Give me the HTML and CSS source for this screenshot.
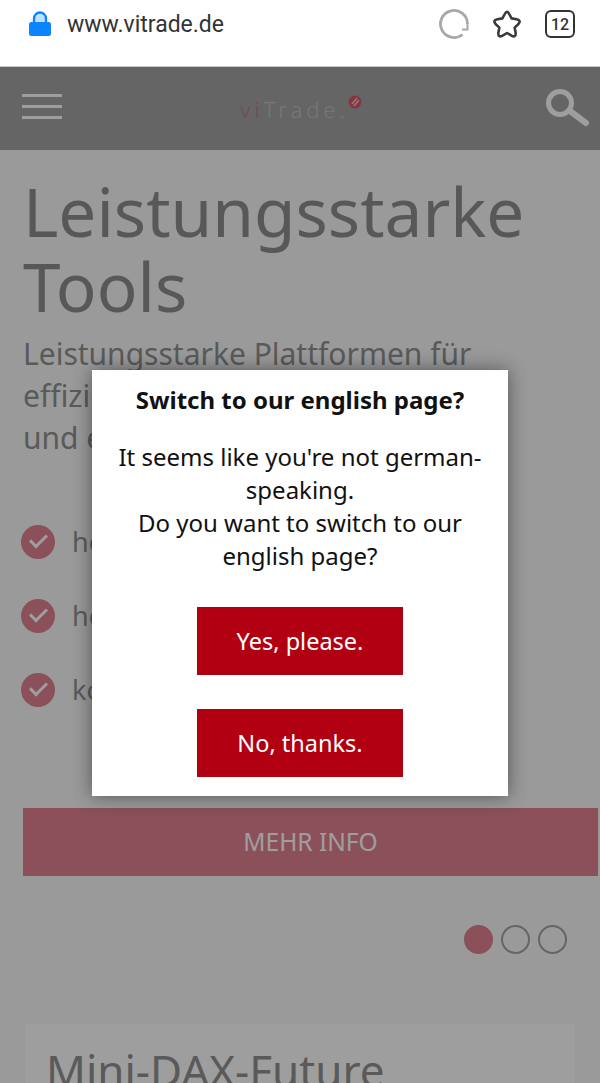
FILE: index.html

```html
<!DOCTYPE html>
<html>
<head>
    <title>vitrade</title>
    <link rel="stylesheet" href="styles.css">
</head>
<body>
    <div class="browser-bar">
        <svg class="lock" width="24" height="26" viewBox="0 0 24 26">
            <path d="M6 12V7.500a6 6 0 0 1 12 0V12" fill="#bfe0ff" stroke="#0a84ff" stroke-width="2.400"/>
            <rect x="1" y="11" width="22" height="14" rx="2.500" fill="#0a84ff"/>
        </svg>
        <span class="url">www.vitrade.de</span>
        <svg class="reload" width="32" height="32" viewBox="0 0 32 32">
            <path d="M24.500 26.500A13.500 13.500 0 1 1 29.500 16" fill="none" stroke="#a8a8a8" stroke-width="2.800"/>
            <path d="M29.500 15v6.500h-5.500" fill="none" stroke="#a8a8a8" stroke-width="2"/>
        </svg>
        <svg class="star" width="32" height="32" viewBox="0 0 32 32">
            <path d="M13.800 6Q16 1.500 18.200 6L20.600 10.400 25.500 11.200Q31 12.300 27 16.500L23.600 19.600 24.600 24.600Q25.200 30 20.400 27.600L16 25 11.600 27.600Q6.800 30 7.400 24.600L8.400 19.600 5 16.500Q1 12.300 6.500 11.200L11.400 10.400Z" fill="none" stroke="#3a3a3a" stroke-width="2.600" stroke-linejoin="round"/>
        </svg>
        <span class="tabs">12</span>
    </div>

    <div class="page">
        <header class="site-header">
            <div class="burger"><span></span><span></span><span></span></div>
            <div class="logo">
                <span class="logo-v">vi</span>Trade.
                <svg class="logo-mark" width="14" height="16" viewBox="0 0 14 16">
                    <circle cx="7" cy="8" r="6.500" fill="#d9586a"/>
                    <path d="M4 10l5-6M6 12l5-6" stroke="#f3c9cf" stroke-width="1.300"/>
                </svg>
            </div>
            <svg class="search" width="48" height="44" viewBox="0 0 48 44">
                <circle cx="17" cy="16" r="11.500" fill="none" stroke="#fff" stroke-width="5"/>
                <path d="M27 24l16 12" stroke="#fff" stroke-width="6" stroke-linecap="round"/>
            </svg>
        </header>

        <section class="hero">
            <h1>Leistungsstarke Tools</h1>
            <p class="lead">Leistungsstarke Plattformen für<br>effiziente Analysen<br>und einfachen Handel</p>
            <ul class="checks">
                <li><span class="tick"></span>hohe Qualität</li>
                <li><span class="tick"></span>hohe Flexibilität</li>
                <li><span class="tick"></span>kostenlos</li>
            </ul>
            <a class="more">MEHR INFO</a>
            <div class="dots">
                <span class="dot active"></span><span class="dot"></span><span class="dot"></span>
            </div>
        </section>

        <section class="card">
            <h2>Mini-DAX-Future</h2>
        </section>

        <div class="overlay"></div>

        <div class="dialog">
            <h3>Switch to our english page?</h3>
            <p>It seems like you're not german-speaking.<br>Do you want to switch to our english page?</p>
            <button>Yes, please.</button>
            <button>No, thanks.</button>
        </div>
    </div>
</body>
</html>
```

FILE: styles.css

```css
html, body {
    margin: 0;
    height: 100%;
    overflow: hidden;
}
body {
    font-family: "Noto Sans", sans-serif;
    background: #fff;
}
.browser-bar {
    height: 67px;
    display: flex;
    align-items: center;
    padding: 0 0 18px 28px;
    box-sizing: border-box;
    background: #fff;
    border-bottom: 1px solid #c8c8c8;
}
.url {
    font-family: Roboto, sans-serif;
    font-size: 23px;
    color: #333;
    margin-left: 15px;
    flex: 1;
}
.reload {
    margin-right: 21px;
}
.star {
    margin-right: 22px;
}
.tabs {
    width: 26px;
    height: 24px;
    margin-right: 25px;
    border: 2.500px solid #333;
    border-radius: 6px;
    font-family: Roboto, sans-serif;
    font-size: 16px;
    font-weight: 500;
    color: #333;
    display: flex;
    align-items: center;
    justify-content: center;
}
.page {
    position: relative;
    height: 1016px;
    overflow: hidden;
    background: #f9f9f9;
}
.site-header {
    height: 83px;
    background: #a4a4a4;
    display: flex;
    align-items: center;
    justify-content: space-between;
    padding: 0 9px 0 22px;
}
.burger {
    width: 40px;
    margin-bottom: 4px;
    display: flex;
    flex-direction: column;
    gap: 7.500px;
}
.burger span {
    height: 3.500px;
    background: #fff;
}
.logo {
    display: flex;
    align-items: flex-end;
    margin-left: -3px;
    font-size: 22px;
    font-weight: 300;
    letter-spacing: 4px;
    color: #c0c0c0;
}
.logo-v {
    color: #b87a84;
}
.logo-mark {
    margin: 0 0 14px -1px;
}
.hero {
    padding: 24px 0 0 23px;
}
h1 {
    margin: 0;
    font-size: 67.500px;
    line-height: 75px;
    font-weight: 400;
    color: #8e8e8e;
}
.lead {
    margin: 9px 0 0;
    font-size: 30px;
    line-height: 42px;
    color: #919191;
}
.checks {
    list-style: none;
    margin: 45.500px 0 0 -2px;
    padding: 0;
}
.checks li {
    height: 74px;
    display: flex;
    align-items: center;
    gap: 17px;
    font-size: 27px;
    color: #919191;
}
.tick {
    width: 34px;
    height: 34px;
    border-radius: 50%;
    background: #e08191;
    position: relative;
}
.tick::after {
    content: "";
    position: absolute;
    left: 9px;
    top: 9px;
    width: 14px;
    height: 7px;
    border-left: 3px solid #fff;
    border-bottom: 3px solid #fff;
    transform: rotate(-45deg);
}
.more {
    display: block;
    height: 68px;
    margin-top: 81px;
    margin-right: 2px;
    background: #e08191;
    color: #fff;
    font-size: 24.500px;
    line-height: 68px;
    text-align: center;
}
.dots {
    display: flex;
    gap: 8px;
    justify-content: flex-end;
    margin: 49px 33px 0 0;
}
.dot {
    width: 25px;
    height: 25px;
    border: 2px solid #a4a4a4;
    border-radius: 50%;
}
.dot.active {
    background: #e08191;
    border-color: #e08191;
}
.card {
    margin: 70px 25px 0;
    padding: 16px 21px;
    background: #fff;
}
h2 {
    margin: 0;
    font-size: 44px;
    font-weight: 400;
    color: #919191;
}
.overlay {
    position: absolute;
    inset: 0;
    background: rgba(0, 0, 0, .38);
}
.dialog {
    position: absolute;
    left: 92px;
    top: 303px;
    width: 416px;
    height: 426px;
    box-sizing: border-box;
    padding: 14px 22px 0;
    background: #fff;
    box-shadow: 0 0 18px rgba(0, 0, 0, .45);
    text-align: center;
    color: #111;
}
h3 {
    margin: 0;
    font-size: 24px;
    line-height: 32px;
    font-weight: 700;
}
.dialog p {
    margin: 24px 0 35px;
    font-size: 24px;
    line-height: 33px;
}
.dialog button {
    display: block;
    width: 206px;
    height: 68px;
    margin: 34px auto 0;
    border: 0;
    background: #b10012;
    color: #fff;
    font-family: inherit;
    font-size: 23.500px;
}
```
